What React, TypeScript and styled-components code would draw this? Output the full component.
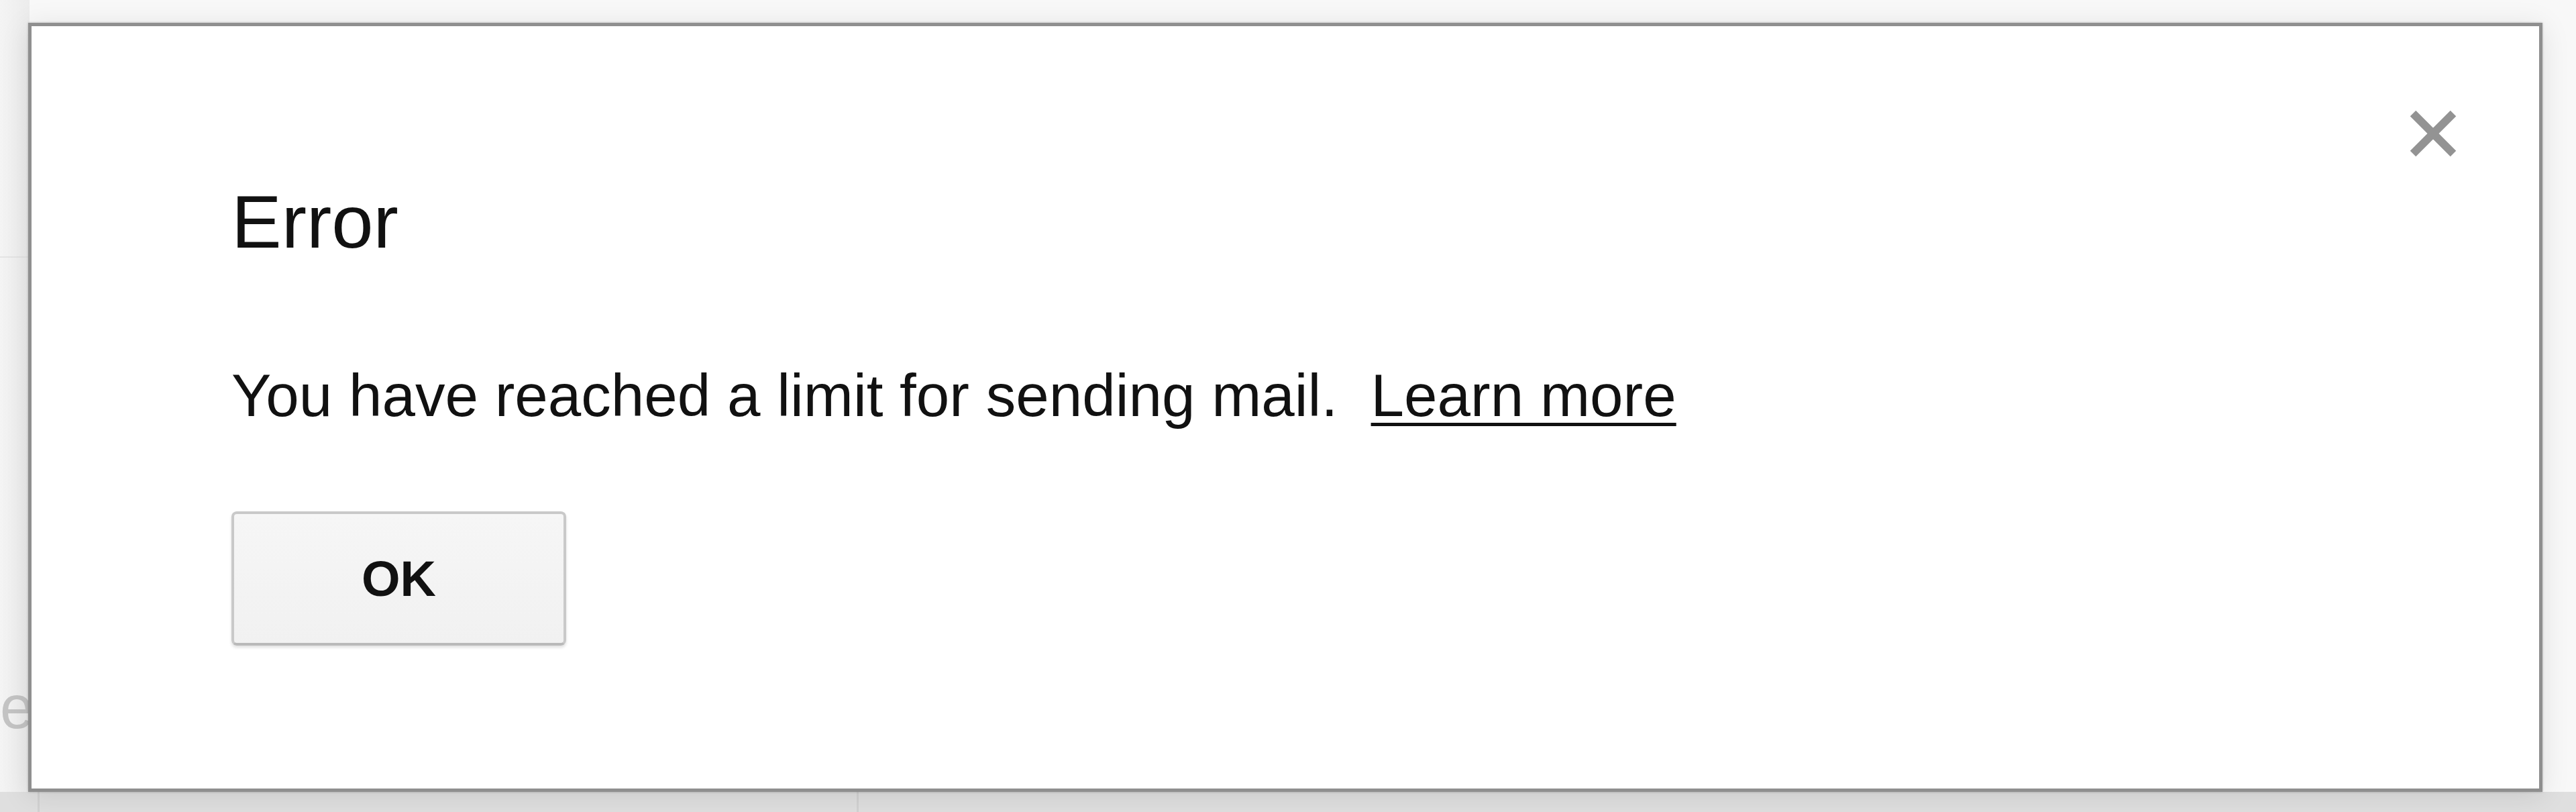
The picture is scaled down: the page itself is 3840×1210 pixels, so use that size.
import React from "react";
import styled, { createGlobalStyle } from "styled-components";

const GlobalStyle = createGlobalStyle`
  html, body {
    margin: 0;
    padding: 0;
    background: #f8f8f8;
  }
  body {
    font-family: "Liberation Sans", Arial, Helvetica, sans-serif;
    color: #111;
  }
`;

const Page = styled.div`
  position: relative;
  width: 3840px;
  height: 1210px;
  overflow: hidden;
  display: flex;
  flex-direction: column;
  background: #f8f8f8;
`;

const Workspace = styled.div`
  flex: 1;
  display: flex;
`;

const LeftRail = styled.div`
  width: 44px;
  display: flex;
  flex-direction: column;
  background: linear-gradient(to right, #f4f4f4, #ececec);
`;

const RailHeader = styled.div`
  height: 382px;
  border-bottom: 2px solid #e4e4e4;
`;

const RailText = styled.div`
  margin-top: 610px;
  font-size: 90px;
  line-height: 120px;
  color: #c4c4c4;
  white-space: nowrap;
`;

const BottomBar = styled.div`
  height: 30px;
  display: flex;
  background: #dfdfdf;
`;

const BarCell = styled.div<{ $width: number }>`
  width: ${(p) => p.$width}px;
  border-right: 3px solid #d2d2d2;
`;

const Dialog = styled.div`
  position: absolute;
  left: 42px;
  top: 34px;
  width: 3748px;
  height: 1146px;
  box-sizing: border-box;
  background: #fff;
  border: 5px solid #8f8f8f;
  box-shadow: 0 0 3px rgba(0, 0, 0, 0.25), 0 6px 40px rgba(0, 0, 0, 0.1);
  padding: 236px 0 0 298px;
  display: flex;
  flex-direction: column;
  align-items: flex-start;
`;

const CloseButton = styled.button`
  position: absolute;
  top: 122px;
  right: 120px;
  width: 76px;
  height: 76px;
  padding: 0;
  border: none;
  background: transparent;
  display: flex;
  cursor: pointer;
`;

const Title = styled.h2`
  margin: 0;
  font-size: 112px;
  line-height: 112px;
  font-weight: 400;
  color: #111;
`;

const Message = styled.p`
  margin: 158px 0 0;
  font-size: 89px;
  line-height: 89px;
  color: #111;
  white-space: nowrap;
`;

const LearnMore = styled.a`
  color: #111;
  text-decoration: underline;
  text-decoration-thickness: 5px;
  text-underline-offset: 10px;
`;

const OkButton = styled.button`
  margin-top: 128px;
  width: 499px;
  height: 200px;
  box-sizing: border-box;
  border: 4px solid #c9c9c9;
  border-bottom-color: #b9b9b9;
  border-radius: 8px;
  background: linear-gradient(#f6f6f6, #f1f1f1);
  box-shadow: 0 3px 4px rgba(0, 0, 0, 0.12);
  font-family: "Liberation Sans", Arial, sans-serif;
  font-size: 74px;
  font-weight: 700;
  color: #111;
  padding: 0;
`;

const CloseIcon = () => (
  <svg width="76" height="76" viewBox="0 0 76 76">
    <g stroke="#939393" strokeWidth="12" strokeLinecap="butt">
      <line x1="8" y1="8" x2="68" y2="68" />
      <line x1="68" y1="8" x2="8" y2="68" />
    </g>
  </svg>
);

const App: React.FC = () => {
  return (
    <>
      <GlobalStyle />
      <Page>
        <Workspace>
          <LeftRail>
            <RailHeader />
            <RailText>ed</RailText>
          </LeftRail>
        </Workspace>
        <BottomBar>
          <BarCell $width={56} />
          <BarCell $width={1218} />
        </BottomBar>

        <Dialog role="alertdialog">
          <CloseButton aria-label="Close">
            <CloseIcon />
          </CloseButton>
          <Title>Error</Title>
          <Message>
            You have reached a limit for sending mail.&nbsp;{" "}
            <LearnMore href="#">Learn more</LearnMore>
          </Message>
          <OkButton>OK</OkButton>
        </Dialog>
      </Page>
    </>
  );
};

export default App;
